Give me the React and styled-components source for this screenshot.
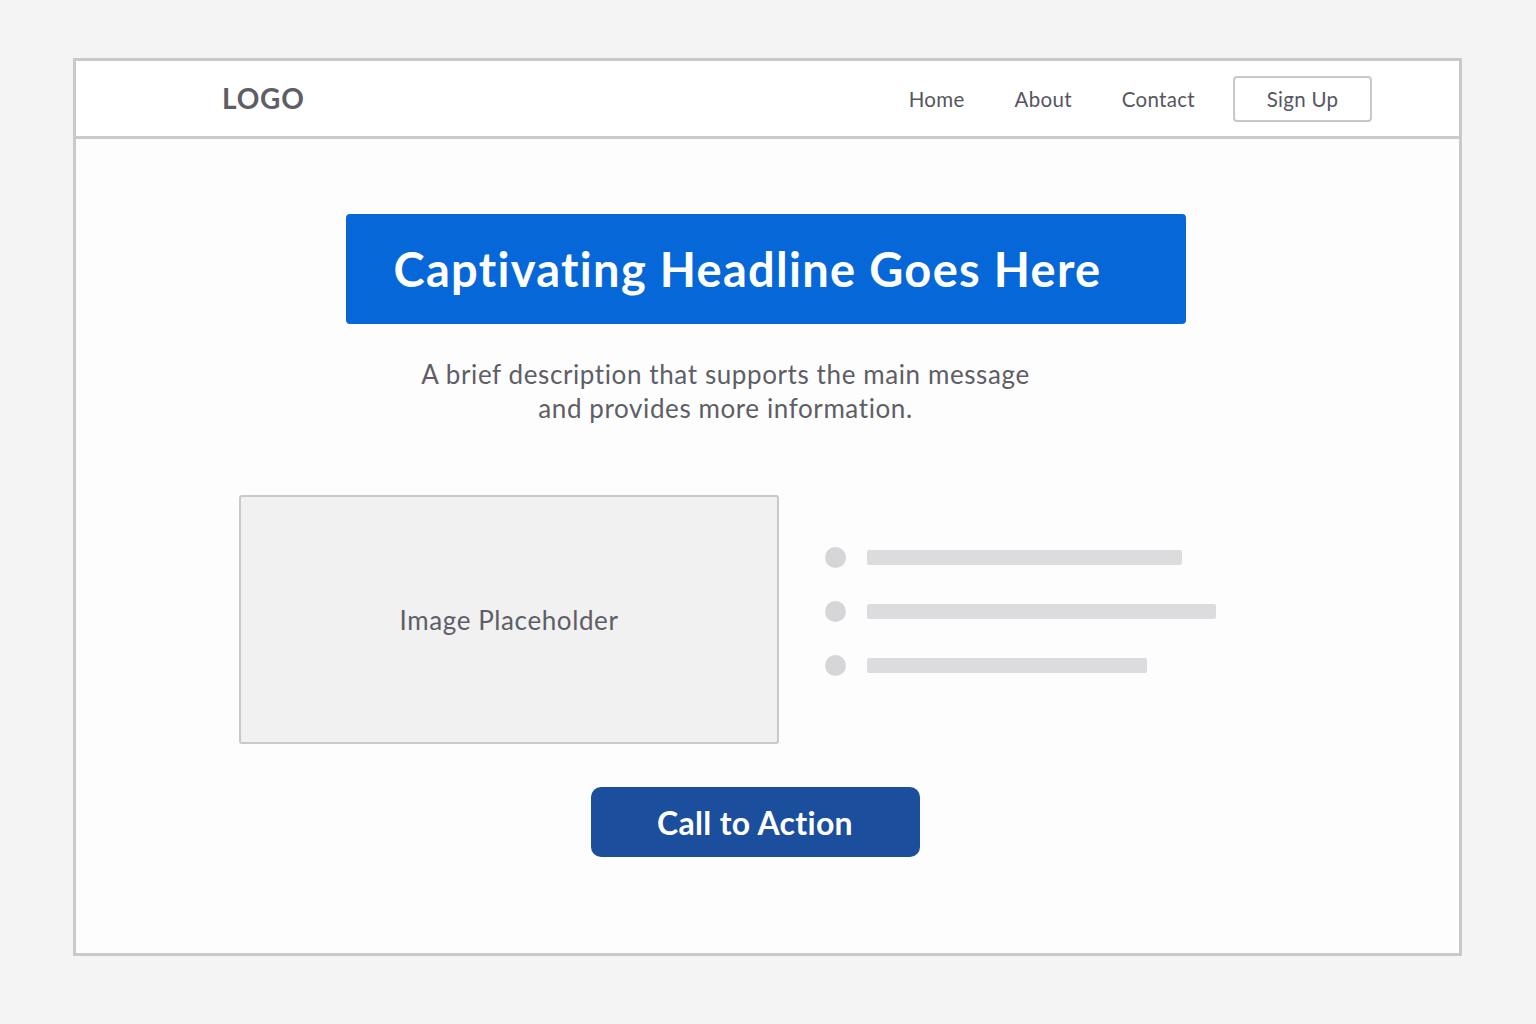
import React from "react";
import styled, { createGlobalStyle } from "styled-components";

const Global = createGlobalStyle`
  html, body { margin: 0; padding: 0; background: #f4f4f5; }
  body { font-family: Lato, "Open Sans", sans-serif; }
`;

const Page = styled.div`
  padding: 58px 0 0 73px;
  height: 1024px;
  box-sizing: border-box;
`;

const Frame = styled.div`
  width: 1389px;
  height: 898px;
  box-sizing: border-box;
  border: 3px solid #c9c9cb;
  background: #fdfdfd;
  display: flex;
  flex-direction: column;
`;

const Header = styled.header`
  height: 78px;
  box-sizing: border-box;
  border-bottom: 3px solid #cbcbcd;
  background: #ffffff;
  display: flex;
  align-items: center;
  padding: 0 87px 0 146px;
`;

const Logo = styled.div`
  font-size: 28px;
  font-weight: 700;
  color: #5e5e66;
  letter-spacing: 0.8px;
  margin-top: -2px;
`;

const Nav = styled.nav`
  margin-left: auto;
  display: flex;
  align-items: center;
  gap: 50px;
`;

const NavLink = styled.a`
  font-size: 20.5px;
  letter-spacing: 0.3px;
  color: #56565f;
  text-decoration: none;
`;

const SignUp = styled.button`
  width: 139px;
  height: 46px;
  margin-left: -12px;
  border: 2px solid #c8c8ca;
  border-radius: 4px;
  background: #fff;
  font-family: inherit;
  font-size: 20.5px;
  letter-spacing: 0.3px;
  color: #56565f;
`;

const Main = styled.main`
  flex: 1;
  display: flex;
  flex-direction: column;
  align-items: center;
  padding-top: 75px;
`;

const Headline = styled.h1`
  margin: 0 4px 0 0;
  width: 840px;
  height: 110px;
  box-sizing: border-box;
  padding-left: 48px;
  display: flex;
  align-items: center;
  background: #0667d9;
  border-radius: 4px;
  color: #fff;
  font-size: 47px;
  font-weight: 700;
  letter-spacing: 1.3px;
`;

const Description = styled.p`
  margin: 33px 84px 0 0;
  font-size: 26px;
  letter-spacing: 0.6px;
  line-height: 34px;
  color: #5e5e66;
  text-align: center;
`;

const Row = styled.section`
  margin-top: 70px;
  align-self: flex-start;
  margin-left: 163px;
  display: flex;
  gap: 46px;
`;

const ImageBox = styled.div`
  width: 540px;
  height: 249px;
  box-sizing: border-box;
  border: 2px solid #c9c9cb;
  border-radius: 3px;
  background: #f1f1f2;
  display: flex;
  align-items: center;
  justify-content: center;
  font-size: 26px;
  letter-spacing: 0.6px;
  color: #5e5e66;
`;

const List = styled.ul`
  list-style: none;
  margin: 52px 0 0;
  padding: 0;
  display: flex;
  flex-direction: column;
  gap: 33px;
`;

const Item = styled.li`
  display: flex;
  align-items: center;
  gap: 21px;
  height: 21px;
`;

const Dot = styled.span`
  width: 21px;
  height: 21px;
  border-radius: 50%;
  background: #d6d6d8;
`;

const Bar = styled.span`
  height: 15px;
  width: ${(p) => p.$w}px;
  border-radius: 2px;
  background: #dcdcde;
`;

const CTA = styled.button`
  margin-top: 43px;
  margin-left: -25px;
  width: 329px;
  height: 70px;
  border: none;
  border-radius: 10px;
  background: #1b4f9d;
  color: #fff;
  font-family: inherit;
  font-size: 32px;
  font-weight: 700;
  letter-spacing: 0.3px;
`;

export default function App() {
  return (
    <>
      <Global />
      <Page>
        <Frame>
          <Header>
            <Logo>LOGO</Logo>
            <Nav>
              <NavLink>Home</NavLink>
              <NavLink>About</NavLink>
              <NavLink>Contact</NavLink>
              <SignUp>Sign Up</SignUp>
            </Nav>
          </Header>
          <Main>
            <Headline>Captivating Headline Goes Here</Headline>
            <Description>
              A brief description that supports the main message
              <br />
              and provides more information.
            </Description>
            <Row>
              <ImageBox>Image Placeholder</ImageBox>
              <List>
                {[315, 349, 280].map((w, i) => (
                  <Item key={i}>
                    <Dot />
                    <Bar $w={w} />
                  </Item>
                ))}
              </List>
            </Row>
            <CTA>Call to Action</CTA>
          </Main>
        </Frame>
      </Page>
    </>
  );
}
